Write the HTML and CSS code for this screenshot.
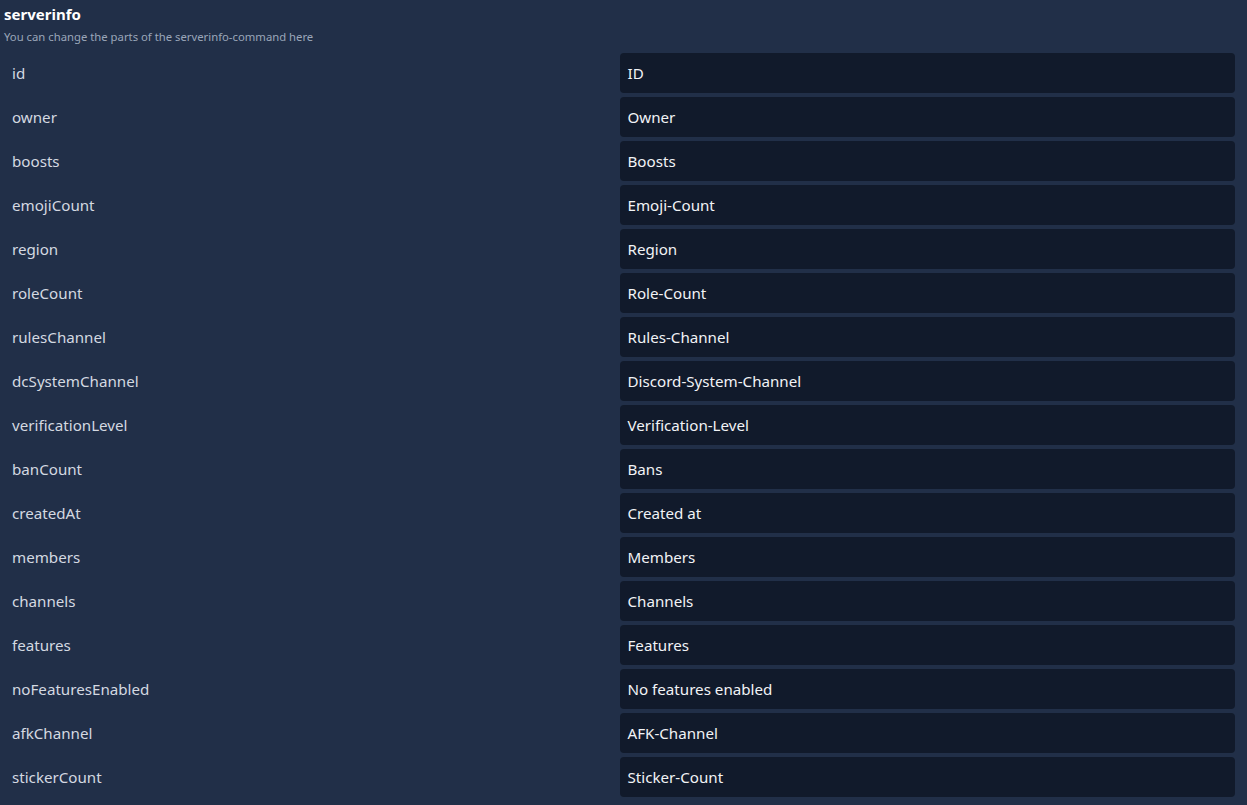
FILE: index.html
```html
<!DOCTYPE html>
<html>
<head>
<meta charset="utf-8">
<link rel="stylesheet" href="styles.css">
</head>
<body>
<div class="page">
  <h1 class="title">serverinfo</h1>
  <p class="subtitle">You can change the parts of the serverinfo-command here</p>
  <div class="rows">
    <div class="row"><span class="key">id</span><div class="field">ID</div></div>
    <div class="row"><span class="key">owner</span><div class="field">Owner</div></div>
    <div class="row"><span class="key">boosts</span><div class="field">Boosts</div></div>
    <div class="row"><span class="key">emojiCount</span><div class="field">Emoji-Count</div></div>
    <div class="row"><span class="key">region</span><div class="field">Region</div></div>
    <div class="row"><span class="key">roleCount</span><div class="field">Role-Count</div></div>
    <div class="row"><span class="key">rulesChannel</span><div class="field">Rules-Channel</div></div>
    <div class="row"><span class="key">dcSystemChannel</span><div class="field">Discord-System-Channel</div></div>
    <div class="row"><span class="key">verificationLevel</span><div class="field">Verification-Level</div></div>
    <div class="row"><span class="key">banCount</span><div class="field">Bans</div></div>
    <div class="row"><span class="key">createdAt</span><div class="field">Created at</div></div>
    <div class="row"><span class="key">members</span><div class="field">Members</div></div>
    <div class="row"><span class="key">channels</span><div class="field">Channels</div></div>
    <div class="row"><span class="key">features</span><div class="field">Features</div></div>
    <div class="row"><span class="key">noFeaturesEnabled</span><div class="field">No features enabled</div></div>
    <div class="row"><span class="key">afkChannel</span><div class="field">AFK-Channel</div></div>
    <div class="row"><span class="key">stickerCount</span><div class="field">Sticker-Count</div></div>
  </div>
</div>
</body>
</html>
```
FILE: styles.css
```css
html, body {
  margin: 0;
  padding: 0;
  background: #212f48;
  font-family: "Noto Sans", "Open Sans", sans-serif;
}
.page {
  padding: 2px 12px 8px 4px;
}
.title {
  margin: 0;
  font-size: 15px;
  font-weight: 700;
  line-height: 24px;
  color: #ffffff;
}
.subtitle {
  margin: 2px 0 8px 0;
  font-size: 11.3px;
  line-height: 17px;
  color: #9aa6b9;
}
.rows {
  display: flex;
  flex-direction: column;
  gap: 4px;
}
.row {
  display: grid;
  grid-template-columns: 1fr 1fr;
  align-items: center;
  height: 40px;
}
.key {
  padding-left: 8px;
  font-size: 15.15px;
  color: #d4d9e1;
}
.field {
  height: 40px;
  display: flex;
  align-items: center;
  padding-left: 8px;
  background: #111a2b;
  border-radius: 4px;
  font-size: 15.15px;
  color: #f1f3f6;
}
```
